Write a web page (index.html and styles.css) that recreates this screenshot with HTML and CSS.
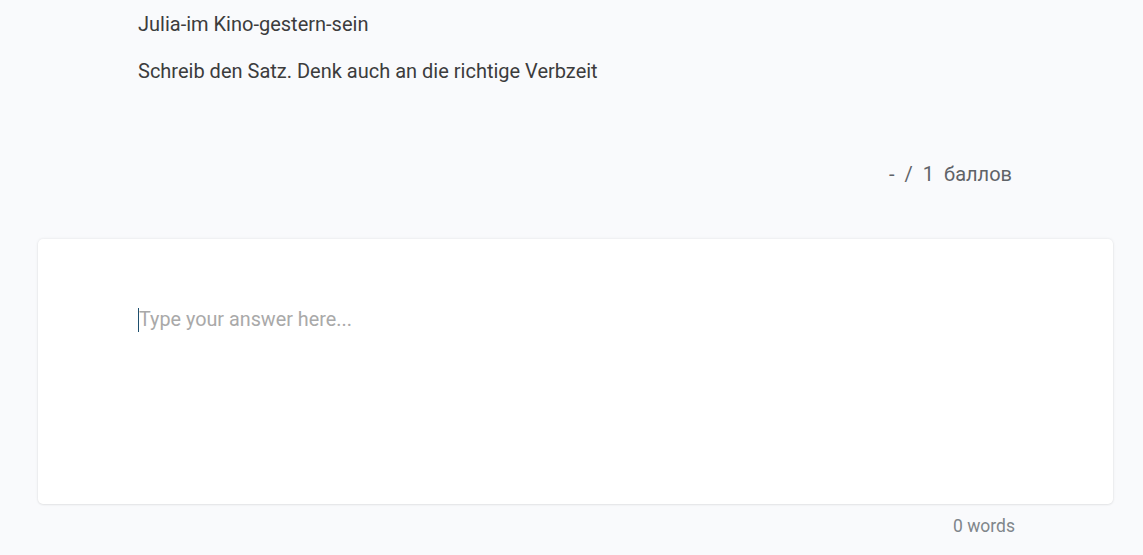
FILE: index.html
```html
<!DOCTYPE html>
<html>
<head>
<meta charset="utf-8">
<link rel="stylesheet" href="styles.css">
</head>
<body>
<div class="page">
  <div class="question">
    <p class="prompt">Julia-im Kino-gestern-sein</p>
    <p class="instruction">Schreib den Satz. Denk auch an die richtige Verbzeit</p>
  </div>
  <div class="points"><span>-</span><span>/</span><span>1</span><span>баллов</span></div>
  <div class="card">
    <div class="answer"><span class="caret"></span><span class="placeholder">Type your answer here...</span></div>
  </div>
  <div class="count">0 words</div>
</div>
</body>
</html>
```
FILE: styles.css
```css
html, body {
  margin: 0;
  padding: 0;
  background: #f9fafc;
  font-family: Roboto, "Liberation Sans", sans-serif;
}
.page {
  width: 1143px;
  height: 555px;
  overflow: hidden;
}
.question {
  padding: 12px 0 0 138px;
  color: #3c3c3c;
  font-size: 20px;
}
.question p {
  margin: 0;
  line-height: 24px;
}
.prompt {
  margin-bottom: 23px !important;
}
.points {
  display: flex;
  justify-content: flex-end;
  gap: 10px;
  padding: 79px 131px 0 0;
  color: #5f6368;
  font-size: 20px;
  line-height: 24px;
}
.card {
  margin: 53px 30px 0 38px;
  height: 265px;
  background: #ffffff;
  border-radius: 5px;
  box-shadow: 0 0 3px rgba(0, 0, 0, 0.10), 0 1px 2px rgba(0, 0, 0, 0.05);
}
.answer {
  display: flex;
  align-items: center;
  padding: 69px 0 0 100px;
  font-size: 19.8px;
  line-height: 24px;
}
.caret {
  width: 1px;
  height: 24px;
  background: #1e4f6e;
}
.placeholder {
  color: #a9a9a9;
}
.count {
  display: flex;
  justify-content: flex-end;
  padding: 11px 128px 0 0;
  color: #80868b;
  font-size: 17.5px;
  line-height: 22px;
}
```
